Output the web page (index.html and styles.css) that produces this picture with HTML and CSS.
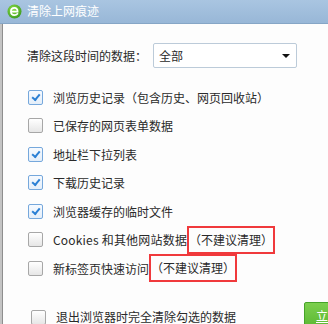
FILE: index.html
```html
<!DOCTYPE html>
<html lang="zh-CN">
<head>
<meta charset="utf-8">
<title>清除上网痕迹</title>
<link rel="stylesheet" href="styles.css">
</head>
<body>
<div class="window">
  <div class="titlebar">
    <svg class="logo" width="15" height="15" viewBox="0 0 15 15">
      <defs>
        <radialGradient id="g" cx="40%" cy="35%" r="70%">
          <stop offset="0" stop-color="#8fe04a"/>
          <stop offset="1" stop-color="#3a9a1c"/>
        </radialGradient>
      </defs>
      <circle cx="7.5" cy="7.5" r="7" fill="url(#g)"/>
      <path d="M4.2 7.6 H10.6 C10.7 5.3 9.3 3.9 7.4 3.9 C5.3 3.9 3.9 5.5 3.9 7.6 C3.9 9.8 5.4 11.2 7.5 11.2 C8.8 11.2 9.8 10.7 10.5 9.8" fill="none" stroke="#fff" stroke-width="1.7" stroke-linecap="round"/>
    </svg>
    <span class="title">清除上网痕迹</span>
  </div>
  <div class="main">
    <div class="range">
      <span class="range-label">清除这段时间的数据：</span>
      <div class="select">
        <span>全部</span>
        <span class="arrow"></span>
      </div>
    </div>
    <ul class="list">
      <li class="row"><span class="cb checked"></span><span>浏览历史记录（包含历史、网页回收站）</span></li>
      <li class="row"><span class="cb"></span><span>已保存的网页表单数据</span></li>
      <li class="row"><span class="cb checked"></span><span>地址栏下拉列表</span></li>
      <li class="row"><span class="cb checked"></span><span>下载历史记录</span></li>
      <li class="row"><span class="cb checked"></span><span>浏览器缓存的临时文件</span></li>
      <li class="row"><span class="cb"></span><span class="cookies">Cookies 和其他网站数据</span><span class="warn">（不建议清理）</span></li>
      <li class="row"><span class="cb"></span><span>新标签页快速访问</span><span class="warn">（不建议清理）</span></li>
    </ul>
    <div class="sep"></div>
    <div class="footer">
      <span class="cb"></span>
      <span class="footer-text">退出浏览器时完全清除勾选的数据</span>
      <span class="btn">立即清理</span>
    </div>
  </div>
</div>
</body>
</html>
```

FILE: styles.css
```css
html, body {
  margin: 0;
  padding: 0;
  background: #fdfdfd;
}
body {
  width: 328px;
  height: 324px;
  overflow: hidden;
  font-family: "Noto Sans CJK SC", "Noto Sans", sans-serif;
  font-size: 12px;
  color: #2a2a2a;
}
.window {
  display: flex;
  flex-direction: column;
  height: 324px;
  overflow: hidden;
}
.titlebar {
  height: 23px;
  border-bottom: 1px solid #86a6c6;
  background: linear-gradient(#a9c5e1, #98b7d7);
  display: flex;
  align-items: center;
  padding-left: 7px;
  flex: none;
}
.logo {
  display: block;
  margin-top: -1px;
}
.title {
  color: #fff;
  margin-left: 5px;
  font-size: 12px;
  line-height: 16px;
  margin-top: -2px;
}
.main {
  flex: 1;
  border-left: 2px solid #c4c4c4;
  box-shadow: inset 1px 0 0 #8e8e8e;
  padding-top: 19px;
  display: flex;
  flex-direction: column;
  overflow: hidden;
}
.range {
  display: flex;
  align-items: center;
  padding-left: 25px;
  height: 25px;
}
.range-label {
  line-height: 16px;
}
.select {
  margin-left: 6px;
  width: 144px;
  height: 25px;
  box-sizing: border-box;
  border: 1px solid #bccbd9;
  border-radius: 2px;
  background: #fff;
  display: flex;
  align-items: center;
  justify-content: space-between;
  padding: 0 5px 0 5px;
}
.arrow {
  width: 0;
  height: 0;
  border-left: 4px solid transparent;
  border-right: 4px solid transparent;
  border-top: 4px solid #111;
  margin-right: 1px;
  margin-top: 1px;
}
.list {
  list-style: none;
  margin: 14.75px 0 0;
  padding: 0 0 0 26px;
}
.row {
  height: 28.5px;
  display: flex;
  align-items: center;
  white-space: nowrap;
}
.cb {
  flex: none;
  width: 15px;
  height: 15px;
  box-sizing: border-box;
  border: 1px solid #a7a7a7;
  border-radius: 2px;
  background: linear-gradient(#ffffff, #e6e6e6);
  margin-right: 10px;
  position: relative;
}
.cb.checked {
  border-color: #76a8dc;
  background: linear-gradient(#f6faff, #e4eef9);
}
.cb.checked::after {
  content: "";
  position: absolute;
  left: 3px;
  top: 1px;
  width: 6px;
  height: 3px;
  border-left: 2px solid #2a7fd4;
  border-bottom: 2px solid #2a7fd4;
  transform: translate(0, 2px) rotate(-50deg);
  transform-origin: center;
}
.cookies {
  letter-spacing: 0.2px;
}
.warn {
  display: inline-block;
  box-sizing: border-box;
  height: 28px;
  line-height: 24px;
  border: 2px solid #f0393c;
}
.sep {
  height: 1px;
  background: #e3e6ea;
  margin: 7.5px 0 0 4px;
}
.footer {
  display: flex;
  align-items: flex-start;
  padding-left: 29px;
  margin-top: 12px;
  height: 40px;
}
.footer .cb {
  margin-top: 8px;
}
.footer-text {
  line-height: 16px;
  margin-top: 7px;
}
.btn {
  margin-left: auto;
  flex: none;
  box-sizing: border-box;
  width: 80px;
  height: 30px;
  margin-right: -56px;
  border: 1px solid #46a329;
  border-radius: 2px;
  background: linear-gradient(#7ccf4e, #56b52f);
  color: #fff;
  text-decoration: underline;
  padding-left: 11px;
  line-height: 26px;
  white-space: nowrap;
}
```
